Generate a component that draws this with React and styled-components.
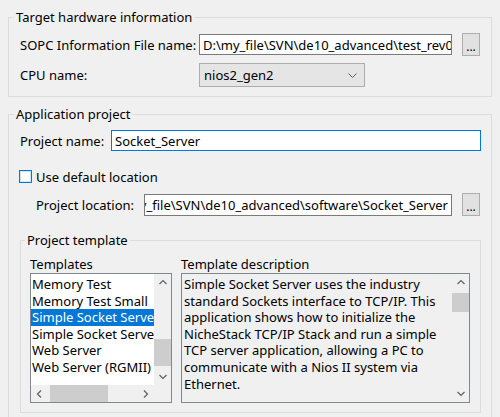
import React from 'react'
import styled, { createGlobalStyle } from 'styled-components'

const GlobalStyle = createGlobalStyle`
  html, body {
    margin: 0;
    padding: 0;
    background: #f0f0f0;
  }
  body {
    font-family: "Noto Sans", "Liberation Sans", sans-serif;
    font-size: 13px;
    color: #000;
    overflow: hidden;
  }
`

const Page = styled.div`
  width: 500px;
  height: 417px;
  box-sizing: border-box;
  padding: 7px 8px 0 8px;
  overflow: hidden;
`

const GroupBox = styled.fieldset`
  margin: ${({ $top }) => $top || 0}px 0 0 0;
  padding: ${({ $pad }) => $pad};
  border: 1px solid #dcdcdc;
  min-width: 0;
`

const Legend = styled.legend`
  margin-left: ${({ $shift }) => $shift}px;
  padding: 0 2px;
  line-height: 20px;
  height: 20px;
`

const FormGrid = styled.div`
  display: grid;
  grid-template-columns: ${({ $cols }) => $cols};
  column-gap: 10px;
  row-gap: 7px;
  align-items: center;
`

const Label = styled.span`
  white-space: nowrap;
  flex-shrink: 0;
  width: ${({ $w }) => ($w ? `${$w}px` : 'auto')};
  padding-left: ${({ $indent }) => $indent || 0}px;
  box-sizing: border-box;
`

const TextField = styled.div`
  box-sizing: border-box;
  height: ${({ $h }) => $h || 21}px;
  width: ${({ $w }) => ($w ? `${$w}px` : 'auto')};
  flex: ${({ $grow }) => ($grow ? 1 : 'none')};
  background: #fff;
  border: 1px solid ${({ $focus }) => ($focus ? '#0078d7' : '#7a7a7a')};
  padding: 0 3px;
  display: flex;
  align-items: center;
  justify-content: ${({ $end }) => ($end ? 'flex-end' : 'flex-start')};
  overflow: hidden;
  white-space: nowrap;
`

const BrowseButton = styled.button`
  box-sizing: border-box;
  width: 18px;
  height: 23px;
  padding: 4px 0 0 0;
  margin: 0 0 0 ${({ $gap }) => $gap || 0}px;
  background: #e1e1e1;
  border: 1px solid #adadad;
  font-family: inherit;
  font-size: 12px;
  line-height: 1;
  color: #000;
`

const Combo = styled.div`
  box-sizing: border-box;
  width: 166px;
  height: 24px;
  background: #e5e5e5;
  border: 1px solid #adadad;
  display: flex;
  align-items: center;
  justify-content: space-between;
  padding: 0 7px 0 4px;
`

const Row = styled.div`
  display: flex;
  align-items: center;
  margin-top: ${({ $top }) => $top || 0}px;
  gap: ${({ $gap }) => $gap || 0}px;
  height: ${({ $h }) => ($h ? `${$h}px` : 'auto')};
`

const CheckBox = styled.span`
  box-sizing: border-box;
  width: 13px;
  height: 13px;
  margin-left: -1px;
  border: 1px solid #0078d7;
  box-shadow: inset 0 0 0 1px #cce4f7;
  background: #fff;
`

const ListsGrid = styled.div`
  display: grid;
  grid-template-columns: 142px 289px;
  column-gap: 9px;
`

const ListTitle = styled.div`
  height: 17px;
  line-height: 16px;
  white-space: nowrap;
`

const ListFrame = styled.div`
  box-sizing: border-box;
  height: 130px;
  border: 1px solid #828790;
  background: ${({ $plain }) => ($plain ? '#f0f0f0' : '#fff')};
  display: grid;
  grid-template-columns: minmax(0, 1fr) 17px;
  grid-template-rows: ${({ $hscroll }) => ($hscroll ? 'minmax(0, 1fr) 17px' : 'minmax(0, 1fr)')};
  overflow: hidden;
`

const Items = styled.div`
  padding-top: 2px;
  overflow: hidden;
`

const Item = styled.div`
  height: 16.6px;
  line-height: 16.6px;
  padding-left: 1px;
  white-space: nowrap;
  background: ${({ $selected }) => ($selected ? '#0078d7' : 'transparent')};
  color: ${({ $selected }) => ($selected ? '#fff' : '#000')};
`

const Description = styled.div`
  padding: 2px 2px 0 2px;
  line-height: 16.6px;
  white-space: nowrap;
  overflow: hidden;
`

const VScroll = styled.div`
  background: #f0f0f0;
  display: flex;
  flex-direction: column;
`

const HScroll = styled.div`
  background: #f0f0f0;
  display: flex;
`

const Track = styled.div`
  flex: 1;
  display: flex;
  flex-direction: ${({ $horizontal }) => ($horizontal ? 'row' : 'column')};
  justify-content: ${({ $end }) => ($end ? 'flex-end' : 'flex-start')};
  padding: ${({ $horizontal }) => ($horizontal ? '0' : '2px 0')};
`

const Thumb = styled.div`
  background: #cdcdcd;
  ${({ $horizontal, $size }) =>
    $horizontal
      ? `width: ${$size}px; height: 17px; margin-left: 2px;`
      : `height: ${$size}px; width: 17px;`}
`

const ArrowBox = styled.div`
  width: 17px;
  height: 17px;
  flex-shrink: 0;
  display: flex;
  align-items: center;
  justify-content: center;
`

const Corner = styled.div`
  background: #f0f0f0;
`

const Arrow = ({ dir }) => {
  const paths = {
    up: 'M1.5 6 L5 2.5 L8.5 6',
    down: 'M1.5 3 L5 6.5 L8.5 3',
    left: 'M6 1.5 L2.5 5 L6 8.5',
    right: 'M3 1.5 L6.5 5 L3 8.5',
  }
  return (
    <ArrowBox>
      <svg width="10" height="10" viewBox="0 0 10 10">
        <path d={paths[dir]} fill="none" stroke="#606060" strokeWidth="1.2" />
      </svg>
    </ArrowBox>
  )
}

const Chevron = () => (
  <svg width="9" height="5" viewBox="0 0 9 5">
    <path d="M0.5 0.5 L4.5 4.5 L8.5 0.5" fill="none" stroke="#5a5a5a" strokeWidth="1" />
  </svg>
)

const templates = [
  'Memory Test',
  'Memory Test Small',
  'Simple Socket Server',
  'Simple Socket Server (RGMII)',
  'Web Server',
  'Web Server (RGMII)',
]

const descLines = [
  'Simple Socket Server uses the industry',
  'standard Sockets interface to TCP/IP. This',
  'application shows how to initialize the',
  'NicheStack TCP/IP Stack and run a simple',
  'TCP server application, allowing a PC to',
  'communicate with a Nios II system via',
  'Ethernet.',
]

const App = () => (
  <Page>
    <GlobalStyle />
    <GroupBox $pad="6px 10px 9px 11px">
      <Legend $shift={-6}>Target hardware information</Legend>
      <FormGrid $cols="169px 253px 18px">
        <Label>SOPC Information File name:</Label>
        <TextField>D:\my_file\SVN\de10_advanced\test_rev0\test_rev0.sopcinfo</TextField>
        <BrowseButton>...</BrowseButton>
        <Label>CPU name:</Label>
        <Combo>
          <span>nios2_gen2</span>
          <Chevron />
        </Combo>
      </FormGrid>
    </GroupBox>

    <GroupBox $top={7} $pad="6px 10px 9px 11px">
      <Legend $shift={-6}>Application project</Legend>
      <Row>
        <Label $w={91}>Project name:</Label>
        <TextField $focus $grow>Socket_Server</TextField>
      </Row>
      <Row $top={17} $gap={4} $h={17}>
        <CheckBox />
        <Label>Use default location</Label>
      </Row>
      <Row $top={8}>
        <Label $indent={16} $w={124}>Project location:</Label>
        <TextField $h={22} $end $w={308}>
          D:\my_file\SVN\de10_advanced\software\Socket_Server
        </TextField>
        <BrowseButton $gap={10}>...</BrowseButton>
      </Row>

      <GroupBox $top={14} $pad="6px 10px 9px 9px">
        <Legend $shift={-5}>Project template</Legend>
        <ListsGrid>
          <div>
            <ListTitle>Templates</ListTitle>
            <ListFrame $hscroll>
              <Items>
                {templates.map((t, i) => (
                  <Item key={t} $selected={i === 2}>{t}</Item>
                ))}
              </Items>
              <VScroll>
                <Arrow dir="up" />
                <Track $end>
                  <Thumb $size={27} />
                </Track>
                <Arrow dir="down" />
              </VScroll>
              <HScroll>
                <Arrow dir="left" />
                <Track $horizontal>
                  <Thumb $horizontal $size={58} />
                </Track>
                <Arrow dir="right" />
              </HScroll>
              <Corner />
            </ListFrame>
          </div>
          <div>
            <ListTitle>Template description</ListTitle>
            <ListFrame $plain>
              <Description>
                {descLines.map((l) => (
                  <div key={l}>{l}</div>
                ))}
              </Description>
              <VScroll>
                <Arrow dir="up" />
                <Track>
                  <Thumb $size={19} />
                </Track>
                <Arrow dir="down" />
              </VScroll>
            </ListFrame>
          </div>
        </ListsGrid>
      </GroupBox>
    </GroupBox>
  </Page>
)

export default App
